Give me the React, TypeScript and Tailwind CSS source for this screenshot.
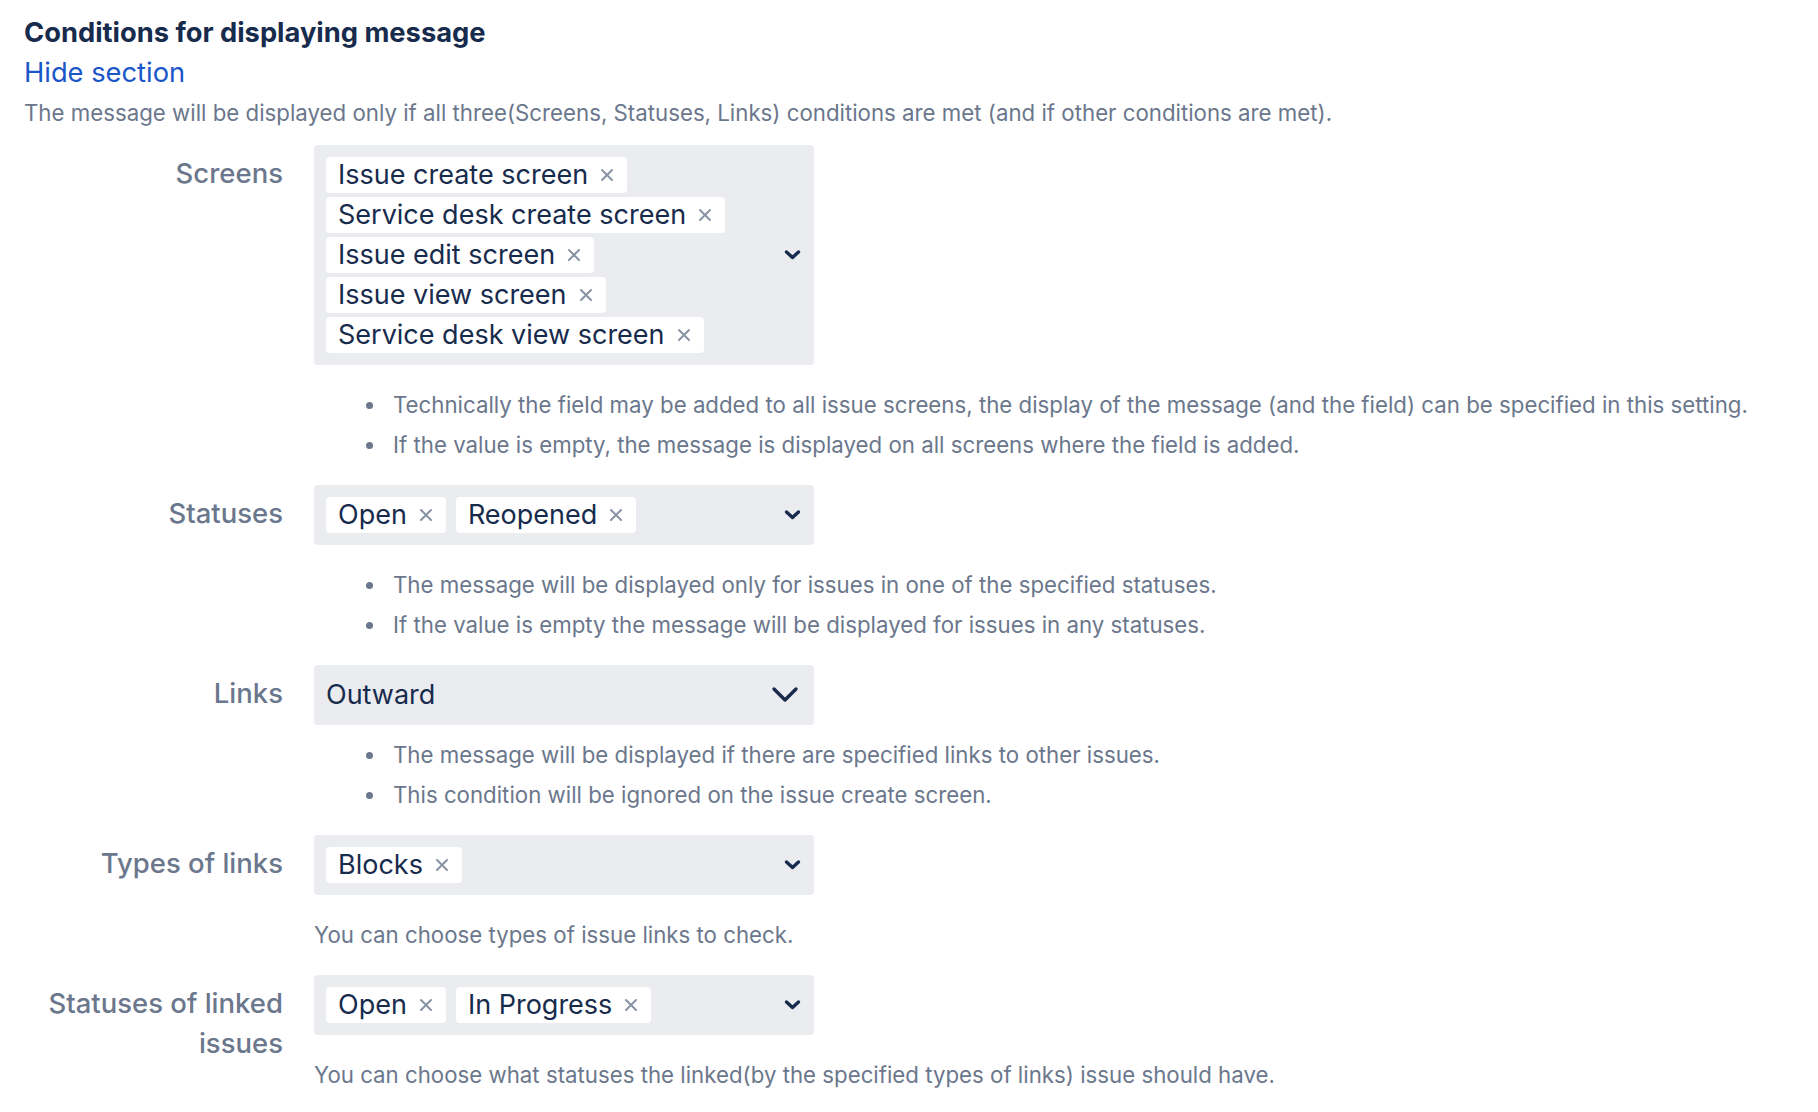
import React from "react";

const Cross = () => (
  <svg width="14" height="14" viewBox="0 0 14 14" className="ml-[12px] shrink-0">
    <path d="M2 2 L12 12 M12 2 L2 12" stroke="#8993a4" strokeWidth="2" strokeLinecap="round" />
  </svg>
);

const SmallChevron = () => (
  <svg width="19" height="12" viewBox="0 0 19 12" className="shrink-0 ml-2">
    <polyline points="3.5,3 9.5,8.5 15.5,3" fill="none" stroke="#172b4d" strokeWidth="3.4" strokeLinecap="round" strokeLinejoin="round" />
  </svg>
);

const BigChevron = () => (
  <svg width="28" height="18" viewBox="0 0 28 18" className="shrink-0 mr-[3px]">
    <polyline points="3,3 14,14 25,3" fill="none" stroke="#172b4d" strokeWidth="3.4" strokeLinecap="round" strokeLinejoin="round" />
  </svg>
);

const Tag = ({ label }: { label: string }) => (
  <div className="flex h-9 items-center rounded bg-white pl-3 pr-[13px] text-[27px] leading-9 text-[#172b4d]">
    <span>{label}</span>
    <Cross />
  </div>
);

const MultiSelect = ({ items }: { items: string[] }) => (
  <div className="flex w-[500px] items-center rounded bg-[#ebecf0] p-3">
    <div className="flex flex-1 flex-wrap gap-x-[10px] gap-y-1">
      {items.map((t) => (
        <Tag key={t} label={t} />
      ))}
    </div>
    <SmallChevron />
  </div>
);

const SingleSelect = ({ value }: { value: string }) => (
  <div className="flex w-[500px] items-center rounded bg-[#ebecf0] p-3">
    <div className="flex-1 text-[27px] leading-9 text-[#172b4d]">{value}</div>
    <BigChevron />
  </div>
);

const Bullets = ({ items, top = "mt-5" }: { items: string[]; top?: string }) => (
  <ul className={`${top} mb-5 text-[22.25px] leading-10 text-[#6b778c]`}>
    {items.map((t) => (
      <li key={t} className="flex items-center whitespace-nowrap">
        <span className="ml-[52px] mr-[20px] h-[7px] w-[7px] shrink-0 rounded-full bg-[#6b778c]" />
        <span>{t}</span>
      </li>
    ))}
  </ul>
);

const Help = ({ text }: { text: string }) => (
  <p className="my-5 whitespace-nowrap text-[22.25px] leading-10 text-[#6b778c]">{text}</p>
);

const Label = ({ children }: { children: React.ReactNode }) => (
  <div className="pt-2 text-right text-[27.5px] font-medium leading-10 text-[#6b778c]">{children}</div>
);

export default function App() {
  return (
    <div className="min-h-screen bg-white pl-6 pt-[13px] font-['Inter',sans-serif]">
      <h2 className="text-[27.3px] font-bold leading-10 text-[#172b4d]">Conditions for displaying message</h2>
      <a className="block cursor-pointer text-[27.3px] leading-10 text-[#1a56c8]">Hide section</a>
      <p className="mb-3 whitespace-nowrap text-[22.25px] leading-10 text-[#6b778c]">
        The message will be displayed only if all three(Screens, Statuses, Links) conditions are met (and if other conditions are met).
      </p>

      <div className="grid grid-cols-[259px_1fr] gap-x-[31px]">
        <Label>Screens</Label>
        <div>
          <MultiSelect
            items={[
              "Issue create screen",
              "Service desk create screen",
              "Issue edit screen",
              "Issue view screen",
              "Service desk view screen",
            ]}
          />
          <Bullets
            items={[
              "Technically the field may be added to all issue screens, the display of the message (and the field) can be specified in this setting.",
              "If the value is empty, the message is displayed on all screens where the field is added.",
            ]}
          />
        </div>

        <Label>Statuses</Label>
        <div>
          <MultiSelect items={["Open", "Reopened"]} />
          <Bullets
            items={[
              "The message will be displayed only for issues in one of the specified statuses.",
              "If the value is empty the message will be displayed for issues in any statuses.",
            ]}
          />
        </div>

        <Label>Links</Label>
        <div>
          <SingleSelect value="Outward" />
          <Bullets
            top="mt-[10px]"
            items={[
              "The message will be displayed if there are specified links to other issues.",
              "This condition will be ignored on the issue create screen.",
            ]}
          />
        </div>

        <Label>Types of links</Label>
        <div>
          <MultiSelect items={["Blocks"]} />
          <Help text="You can choose types of issue links to check." />
        </div>

        <Label>Statuses of linked issues</Label>
        <div>
          <MultiSelect items={["Open", "In Progress"]} />
          <Help text="You can choose what statuses the linked(by the specified types of links) issue should have." />
        </div>
      </div>
    </div>
  );
}
